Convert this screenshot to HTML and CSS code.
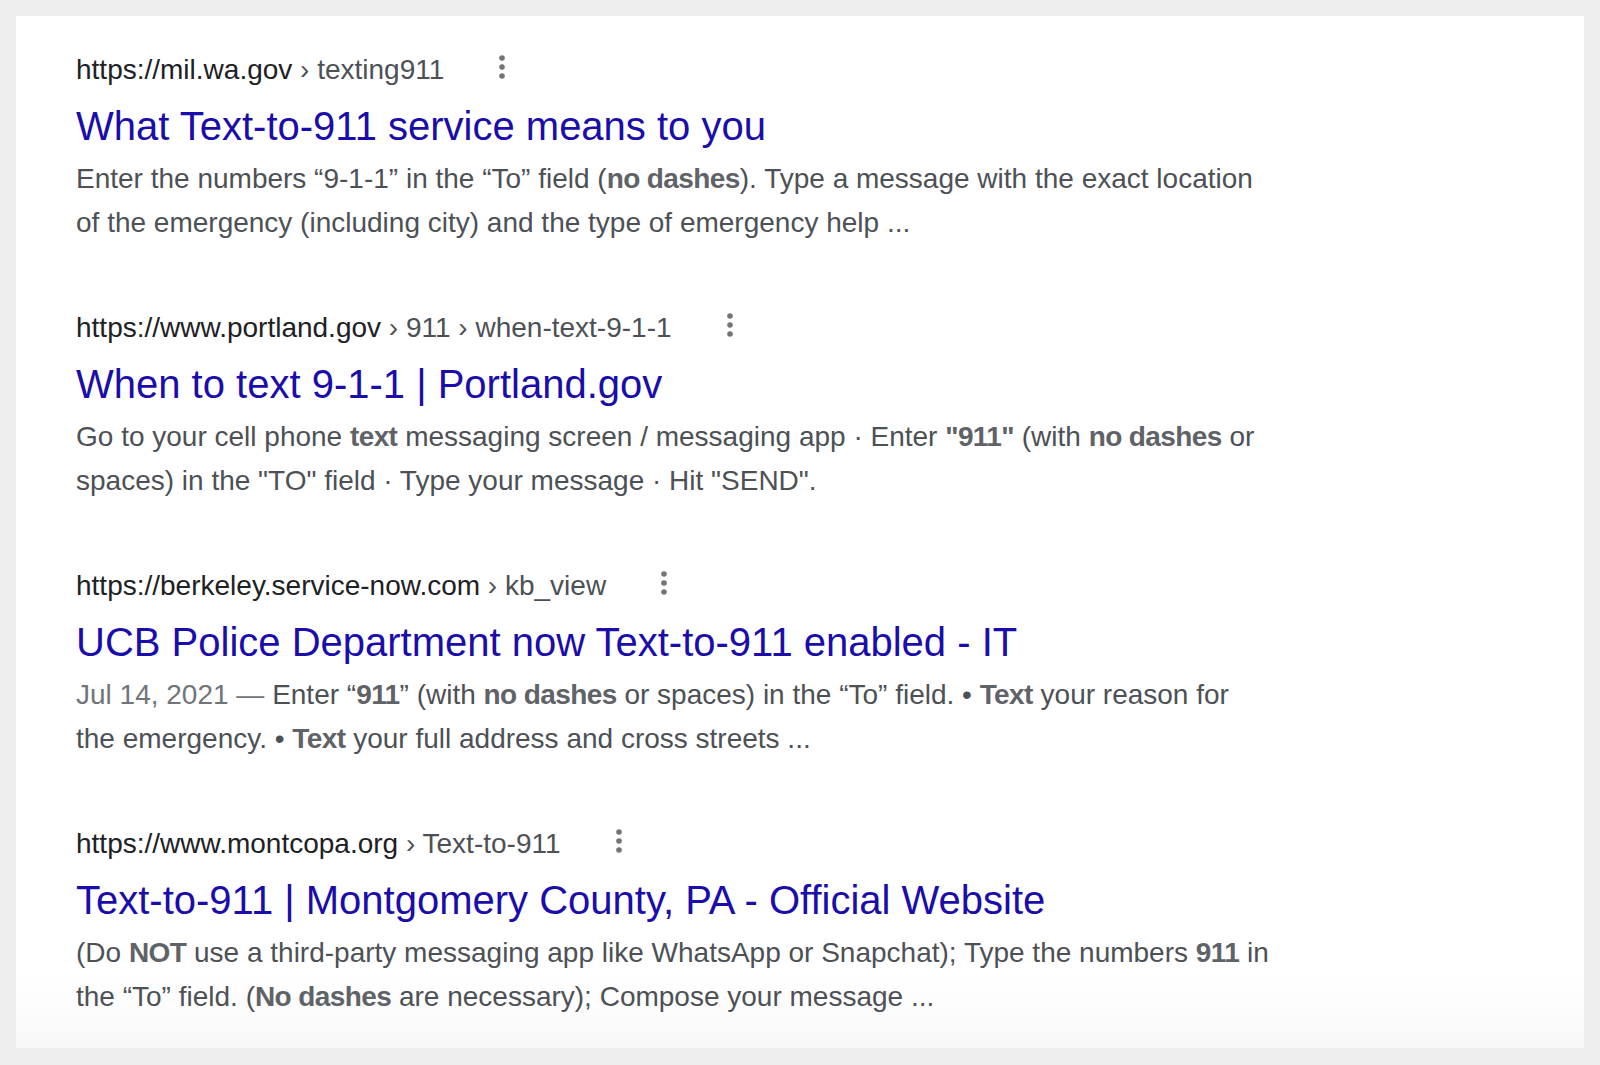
FILE: index.html
```html
<!DOCTYPE html>
<html lang="en">
<head>
<meta charset="utf-8">
<title>Text-to-911 results</title>
<link rel="stylesheet" href="styles.css">
</head>
<body>
<main class="card">
  <div class="result">
    <div class="cite"><span class="domain">https://mil.wa.gov</span><span class="path"> › texting911</span><span class="more"><svg width="8" height="26" viewBox="0 0 8 26"><circle cx="4" cy="4" r="2.8"/><circle cx="4" cy="13" r="2.8"/><circle cx="4" cy="22" r="2.8"/></svg></span></div>
    <h3 class="title">What Text-to-911 service means to you</h3>
    <div class="snippet">Enter the numbers “9-1-1” in the “To” field (<b>no dashes</b>). Type a message with the exact location of the emergency (including city) and the type of emergency help ...</div>
  </div>
  <div class="result">
    <div class="cite"><span class="domain">https://www.portland.gov</span><span class="path"> › 911 › when-text-9-1-1</span><span class="more"><svg width="8" height="26" viewBox="0 0 8 26"><circle cx="4" cy="4" r="2.8"/><circle cx="4" cy="13" r="2.8"/><circle cx="4" cy="22" r="2.8"/></svg></span></div>
    <h3 class="title">When to text 9-1-1 | Portland.gov</h3>
    <div class="snippet">Go to your cell phone <b>text</b> messaging screen / messaging app · Enter <b>"911"</b> (with <b>no dashes</b> or spaces) in the "TO" field · Type your message · Hit "SEND".</div>
  </div>
  <div class="result">
    <div class="cite"><span class="domain">https://berkeley.service-now.com</span><span class="path"> › kb_view</span><span class="more"><svg width="8" height="26" viewBox="0 0 8 26"><circle cx="4" cy="4" r="2.8"/><circle cx="4" cy="13" r="2.8"/><circle cx="4" cy="22" r="2.8"/></svg></span></div>
    <h3 class="title">UCB Police Department now Text-to-911 enabled - IT</h3>
    <div class="snippet"><span class="date">Jul 14, 2021 — </span>Enter “<b>911</b>” (with <b>no dashes</b> or spaces) in the “To” field. • <b>Text</b> your reason for the emergency. • <b>Text</b> your full address and cross streets ...</div>
  </div>
  <div class="result">
    <div class="cite"><span class="domain">https://www.montcopa.org</span><span class="path"> › Text-to-911</span><span class="more"><svg width="8" height="26" viewBox="0 0 8 26"><circle cx="4" cy="4" r="2.8"/><circle cx="4" cy="13" r="2.8"/><circle cx="4" cy="22" r="2.8"/></svg></span></div>
    <h3 class="title">Text-to-911 | Montgomery County, PA - Official Website</h3>
    <div class="snippet">(Do <b>NOT</b> use a third-party messaging app like WhatsApp or Snapchat); Type the numbers <b>911</b> in the “To” field. (<b>No dashes</b> are necessary); Compose your message ...</div>
  </div>
</main>
</body>
</html>
```

FILE: styles.css
```css
html, body {
  margin: 0;
  padding: 0;
}
body {
  background: #eeeeee;
  font-family: Arial, "Liberation Sans", sans-serif;
  padding: 16px 16px 0 16px;
}
.card {
  background: linear-gradient(to bottom, #ffffff 0, #ffffff 960px, #f8f8f8 1032px);
  height: 1032px;
  box-sizing: border-box;
  padding: 32px 0 0 60px;
  display: flex;
  flex-direction: column;
  gap: 61px;
}
.result {
  width: 1196px;
}
.cite {
  display: flex;
  align-items: center;
  height: 44px;
  font-size: 28px;
  line-height: 44px;
  white-space: pre;
}
.domain {
  color: #202124;
}
.path {
  color: #4d5156;
}
.more {
  display: inline-flex;
  align-items: center;
  justify-content: center;
  width: 36px;
  height: 44px;
  margin-left: 40px;
  margin-top: -7px;
  fill: #70757a;
}
.title {
  margin: 8px 0 0 0;
  font-size: 40px;
  line-height: 52px;
  font-weight: normal;
  color: #1a0dab;
}
.snippet {
  margin-top: 5px;
  font-size: 28px;
  line-height: 44px;
  color: #4d5156;
}
.snippet b {
  color: #5f6368;
  font-weight: bold;
  letter-spacing: -0.6px;
}
.date {
  color: #70757a;
}
```
